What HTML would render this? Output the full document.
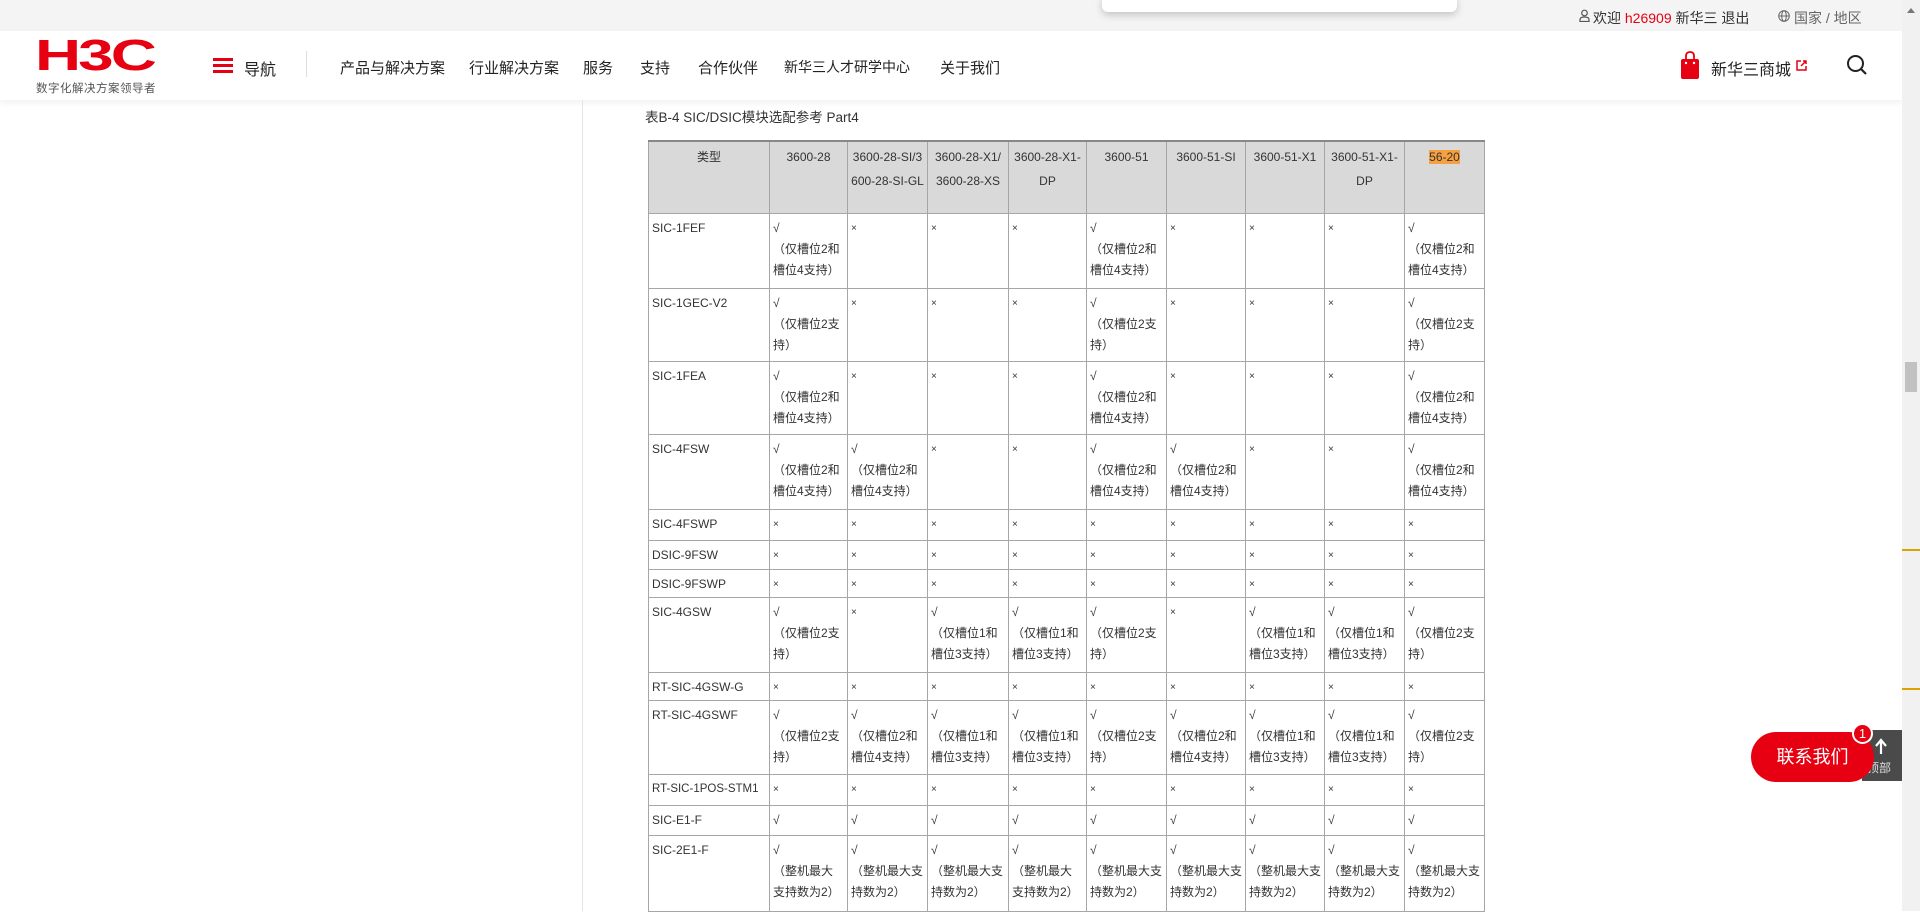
<!DOCTYPE html>
<html><head><meta charset="utf-8"><style>
*{margin:0;padding:0;box-sizing:border-box}
body{width:1920px;height:911px;overflow:hidden;background:#fff;font-family:"Liberation Sans","Noto Sans CJK SC",sans-serif;color:#333;position:relative}
.top{position:absolute;left:0;top:0;width:1902px;height:31px;background:#f4f4f4;font-size:14px}
.pop{position:absolute;left:1102px;top:-5px;width:355px;height:17px;background:#fff;border-radius:6px;box-shadow:0 3px 8px rgba(0,0,0,.2)}
.nav{position:absolute;left:0;top:31px;width:1902px;height:69px;background:#fff;box-shadow:0 3px 6px rgba(0,0,0,.06);font-size:15px;color:#222}
.abs{position:absolute;white-space:nowrap}
.sb{position:absolute;left:1902px;top:0;width:18px;height:911px;background:#f1f1f1}
table{position:absolute;left:648px;top:140px;border-collapse:collapse;table-layout:fixed;font-size:12px;color:#333}
td{border:1px solid #a6a6a6;vertical-align:top;padding:4px 3px 0 3px;line-height:21px;overflow:hidden}
tr.h td{background:#d9d9d9;text-align:center;border-top:2px solid #888;line-height:24px;padding-top:3px}
td:first-child{padding-left:3px;white-space:nowrap}
.x{font-size:10px}
</style></head><body>
<div class="top">
<div class="pop"></div>
<svg class="abs" style="left:1579px;top:9px" width="11" height="13" viewBox="0 0 11 13"><circle cx="5.5" cy="4" r="2.8" fill="none" stroke="#555" stroke-width="1.2"/><path d="M1 12.5 V10.5 Q1 8 5.5 8 Q10 8 10 10.5 V12.5 Z" fill="none" stroke="#555" stroke-width="1.2"/></svg>
<div class="abs" style="left:1593px;top:8px;color:#333">欢迎 <span style="color:#e60012">h26909</span> 新华三 退出</div>
<svg class="abs" style="left:1778px;top:10px" width="12" height="12" viewBox="0 0 12 12"><circle cx="6" cy="6" r="5.3" fill="none" stroke="#666"/><ellipse cx="6" cy="6" rx="2.3" ry="5.3" fill="none" stroke="#666"/><path d="M.7 6H11.3" stroke="#666"/></svg>
<div class="abs" style="left:1794px;top:8px;color:#666">国家 / 地区</div>
</div>
<div class="nav">
<div class="abs" style="left:35px;top:0px;font-size:44px;font-weight:bold;color:#e60012;letter-spacing:-2px;font-family:'Liberation Sans',sans-serif;transform:scaleX(1.45);transform-origin:left">H3C</div>
<div class="abs" style="left:36px;top:49px;font-size:11.5px;color:#555;letter-spacing:.5px">数字化解决方案领导者</div>
<div class="abs" style="left:213px;top:27px;width:20px;height:15px;border-top:3px solid #e60012;border-bottom:3px solid #e60012"><div style="margin-top:3px;height:3px;background:#e60012"></div></div>
<div class="abs" style="left:244px;top:25px;font-size:16px">导航</div>
<div class="abs" style="left:306px;top:20px;width:1px;height:26px;background:#ddd"></div>
<div class="abs" style="left:340px;top:26px">产品与解决方案</div>
<div class="abs" style="left:469px;top:26px">行业解决方案</div>
<div class="abs" style="left:583px;top:26px">服务</div>
<div class="abs" style="left:640px;top:26px">支持</div>
<div class="abs" style="left:698px;top:26px">合作伙伴</div>
<div class="abs" style="left:784px;top:26px;font-size:14px">新华三人才研学中心</div>
<div class="abs" style="left:940px;top:26px">关于我们</div>
<svg class="abs" style="left:1681px;top:19px" width="18" height="30" viewBox="0 0 18 30"><path d="M5 10 V6 Q5 2 9 2 Q13 2 13 6 V10" fill="none" stroke="#e60012" stroke-width="1.8"/><rect x="0" y="9" width="18" height="20" rx="2" fill="#e60012"/><circle cx="5" cy="13" r="1.2" fill="#fff"/><circle cx="13" cy="13" r="1.2" fill="#fff"/></svg>
<div class="abs" style="left:1711px;top:25px;font-size:16px">新华三商城</div>
<svg class="abs" style="left:1796px;top:29px" width="11" height="11" viewBox="0 0 11 11"><path d="M5 1H1V10H10V6" fill="none" stroke="#e60012" stroke-width="1.5"/><path d="M5 6L10 1M7 1H10V4" fill="none" stroke="#e60012" stroke-width="1.5"/></svg>
<svg class="abs" style="left:1846px;top:23px" width="22" height="22" viewBox="0 0 22 22"><circle cx="9.5" cy="9.5" r="7.5" fill="none" stroke="#222" stroke-width="2"/><path d="M15 15L20 20" stroke="#222" stroke-width="2.2"/></svg>
</div>
<div class="abs" style="left:582px;top:100px;width:1px;height:811px;background:#e5e5e5"></div>
<div class="abs" style="left:645px;top:106px;font-size:13.5px;color:#333">表B-4 SIC/DSIC模块选配参考 Part4</div>
<table>
<colgroup><col style="width:121px"><col style="width:78px"><col style="width:80px"><col style="width:81px"><col style="width:78px"><col style="width:80px"><col style="width:79px"><col style="width:79px"><col style="width:80px"><col style="width:80px"></colgroup>
<tr class="h" style="height:72px"><td>类型</td><td>3600-28</td><td style="word-break:break-all">3600-28-SI/3600-28-SI-GL</td><td>3600-28-X1/<br>3600-28-XS</td><td>3600-28-X1-<br>DP</td><td>3600-51</td><td>3600-51-SI</td><td>3600-51-X1</td><td>3600-51-X1-<br>DP</td><td><span style="background:#f7a040">56-20</span></td></tr>
<tr style="height:75px"><td>SIC-1FEF</td><td>√<br>（仅槽位2和槽位4支持）</td><td class="x">×</td><td class="x">×</td><td class="x">×</td><td>√<br>（仅槽位2和槽位4支持）</td><td class="x">×</td><td class="x">×</td><td class="x">×</td><td>√<br>（仅槽位2和槽位4支持）</td></tr>
<tr style="height:73px"><td>SIC-1GEC-V2</td><td>√<br>（仅槽位2支持）</td><td class="x">×</td><td class="x">×</td><td class="x">×</td><td>√<br>（仅槽位2支持）</td><td class="x">×</td><td class="x">×</td><td class="x">×</td><td>√<br>（仅槽位2支持）</td></tr>
<tr style="height:73px"><td>SIC-1FEA</td><td>√<br>（仅槽位2和槽位4支持）</td><td class="x">×</td><td class="x">×</td><td class="x">×</td><td>√<br>（仅槽位2和槽位4支持）</td><td class="x">×</td><td class="x">×</td><td class="x">×</td><td>√<br>（仅槽位2和槽位4支持）</td></tr>
<tr style="height:75px"><td>SIC-4FSW</td><td>√<br>（仅槽位2和槽位4支持）</td><td>√<br>（仅槽位2和槽位4支持）</td><td class="x">×</td><td class="x">×</td><td>√<br>（仅槽位2和槽位4支持）</td><td>√<br>（仅槽位2和槽位4支持）</td><td class="x">×</td><td class="x">×</td><td>√<br>（仅槽位2和槽位4支持）</td></tr>
<tr style="height:31px"><td>SIC-4FSWP</td><td class="x">×</td><td class="x">×</td><td class="x">×</td><td class="x">×</td><td class="x">×</td><td class="x">×</td><td class="x">×</td><td class="x">×</td><td class="x">×</td></tr>
<tr style="height:29px"><td>DSIC-9FSW</td><td class="x">×</td><td class="x">×</td><td class="x">×</td><td class="x">×</td><td class="x">×</td><td class="x">×</td><td class="x">×</td><td class="x">×</td><td class="x">×</td></tr>
<tr style="height:28px"><td>DSIC-9FSWP</td><td class="x">×</td><td class="x">×</td><td class="x">×</td><td class="x">×</td><td class="x">×</td><td class="x">×</td><td class="x">×</td><td class="x">×</td><td class="x">×</td></tr>
<tr style="height:75px"><td>SIC-4GSW</td><td>√<br>（仅槽位2支持）</td><td class="x">×</td><td>√<br>（仅槽位1和槽位3支持）</td><td>√<br>（仅槽位1和槽位3支持）</td><td>√<br>（仅槽位2支持）</td><td class="x">×</td><td>√<br>（仅槽位1和槽位3支持）</td><td>√<br>（仅槽位1和槽位3支持）</td><td>√<br>（仅槽位2支持）</td></tr>
<tr style="height:28px"><td>RT-SIC-4GSW-G</td><td class="x">×</td><td class="x">×</td><td class="x">×</td><td class="x">×</td><td class="x">×</td><td class="x">×</td><td class="x">×</td><td class="x">×</td><td class="x">×</td></tr>
<tr style="height:74px"><td>RT-SIC-4GSWF</td><td>√<br>（仅槽位2支持）</td><td>√<br>（仅槽位2和槽位4支持）</td><td>√<br>（仅槽位1和槽位3支持）</td><td>√<br>（仅槽位1和槽位3支持）</td><td>√<br>（仅槽位2支持）</td><td>√<br>（仅槽位2和槽位4支持）</td><td>√<br>（仅槽位1和槽位3支持）</td><td>√<br>（仅槽位1和槽位3支持）</td><td>√<br>（仅槽位2支持）</td></tr>
<tr style="height:31px"><td style="font-size:11.5px">RT-SIC-1POS-STM1</td><td class="x">×</td><td class="x">×</td><td class="x">×</td><td class="x">×</td><td class="x">×</td><td class="x">×</td><td class="x">×</td><td class="x">×</td><td class="x">×</td></tr>
<tr style="height:30px"><td>SIC-E1-F</td><td>√</td><td>√</td><td>√</td><td>√</td><td>√</td><td>√</td><td>√</td><td>√</td><td>√</td></tr>
<tr style="height:76px"><td>SIC-2E1-F</td><td>√<br>（整机最大支持数为2）</td><td>√<br>（整机最大支持数为2）</td><td>√<br>（整机最大支持数为2）</td><td>√<br>（整机最大支持数为2）</td><td>√<br>（整机最大支持数为2）</td><td>√<br>（整机最大支持数为2）</td><td>√<br>（整机最大支持数为2）</td><td>√<br>（整机最大支持数为2）</td><td>√<br>（整机最大支持数为2）</td></tr>
</table>
<div class="sb">
<div class="abs" style="left:5px;top:8px;width:0;height:0;border-left:4px solid transparent;border-right:4px solid transparent;border-bottom:5px solid #777"></div>
<div class="abs" style="left:3px;top:362px;width:12px;height:30px;background:#c1c1c1"></div>
<div class="abs" style="left:0;top:549px;width:18px;height:2px;background:#d9a300"></div>
<div class="abs" style="left:0;top:688px;width:18px;height:2px;background:#d9a300"></div>
</div>
<div class="abs" style="left:1862px;top:730px;width:40px;height:51px;background:#4a4a4a"></div>
<svg class="abs" style="left:1874px;top:738px" width="14" height="16" viewBox="0 0 14 16"><path d="M7 16V3M2 8L7 2L12 8" fill="none" stroke="#fff" stroke-width="2.2"/></svg>
<div class="abs" style="left:1867px;top:759px;font-size:12px;color:#ddd">顶部</div>
<div class="abs" style="left:1751px;top:732px;width:123px;height:50px;background:#e60012;border-radius:25px;color:#fff;font-size:18px;line-height:50px;text-align:center">联系我们</div>
<div class="abs" style="left:1852px;top:723px;width:21px;height:21px;border-radius:50%;background:#e60012;border:2px solid #fff;color:#fff;font-size:13px;line-height:17px;text-align:center">1</div>
</body></html>
